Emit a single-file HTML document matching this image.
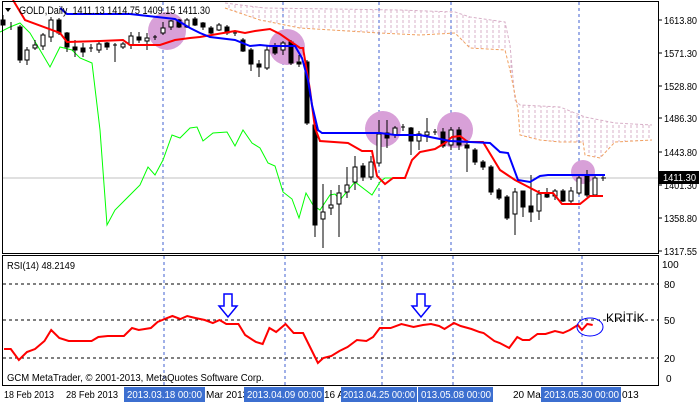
<!DOCTYPE html>
<html><head><meta charset="utf-8"><style>
html,body{margin:0;padding:0;background:#fff;}
svg{display:block;font-family:"Liberation Sans",sans-serif;}
</style></head><body>
<svg width="700" height="402" viewBox="0 0 700 402" xmlns="http://www.w3.org/2000/svg">
<defs>
<pattern id="hatch" width="6" height="5" patternUnits="userSpaceOnUse">
<line x1="1" y1="0" x2="1" y2="3" stroke="#d8b0c8" stroke-width="1"/>
</pattern>
</defs>
<rect width="700" height="402" fill="#fff"/>
<polygon points="225,3 265,8 400,10 455,12 470,17 505,22 510,45 515,100 520,105 560,107 585,117 615,123 652,125 652,140 615,142 600,158 585,155 583,142 560,142 540,140 520,135 518,110 510,70 505,50 470,48 462,40 455,33 420,35 380,33 300,28 260,20 225,8" fill="url(#hatch)"/>
<polyline points="225,3 265,8 400,10 455,12 470,17 505,22 510,45 515,100 520,105 560,107 585,117 615,123 652,125" fill="none" stroke="#d8b0c8" stroke-dasharray="3,2"/>
<polyline points="225,8 260,20 300,28 380,33 420,35 455,33 462,40 470,48 505,50 510,70 518,110 520,135 540,140 560,142 583,142 585,155 600,158 615,142 652,140" fill="none" stroke="#f0a060" stroke-dasharray="3,2"/>
<g stroke="#4060d0" stroke-dasharray="3,3" stroke-width="1">
<line x1="163" y1="2" x2="163" y2="253"/><line x1="283" y1="2" x2="283" y2="253"/><line x1="379" y1="2" x2="379" y2="253"/><line x1="451" y1="2" x2="451" y2="253"/><line x1="579" y1="2" x2="579" y2="253"/>
<line x1="164" y1="256" x2="164" y2="385"/><line x1="285" y1="256" x2="285" y2="385"/><line x1="382" y1="256" x2="382" y2="385"/><line x1="453" y1="256" x2="453" y2="385"/><line x1="582" y1="256" x2="582" y2="385"/>
</g>
<line x1="2" y1="178" x2="658" y2="178" stroke="#c0c0c0"/>
<g fill="#d8a0d8">
<circle cx="167" cy="31" r="19"/><circle cx="287" cy="47" r="18"/><circle cx="383" cy="129" r="18"/><circle cx="455" cy="130" r="18"/><circle cx="583" cy="172" r="12"/>
</g>
<polyline points="0,32 10,27 15,25 20,23 30,33 40,50 50,67 60,47 72,50 80,58 92,63 100,130 107,225 115,210 125,200 140,185 148,167 155,175 163,160 172,135 180,138 190,128 197,127 203,141 213,133 227,132 235,146 243,130 252,143 260,148 268,163 275,166 283,192 292,199 299,218 306,193 313,205 320,210 330,195 335,194 340,200 355,182 372,195 380,182 385,178 395,178" fill="none" stroke="#00ff00" stroke-width="1"/>
<g stroke="#000" stroke-width="1">
<path d="M3,15V25M11,22V30M20,25V63M27,47V65M35,40V50M43,33V50M51,17V42M59,18V35M67,32V52M75,40V57M83,43V57M91,44V52M99,42V53M107,42V50M115,43V62M123,42V49M131,32V49M139,32V43M147,33V50M155,35V40M163,22V35M171,20V30M179,19V28M187,18V28M195,17V26M203,22V30M211,26V34M219,23V31M227,25V35M235,30V36M243,38V52M251,48V71M259,60V77M267,46V70M275,43V55M283,41V55M291,40V65M299,55V67M307,60V125M315,120V237M323,184V248M331,190V215M339,185V237M347,167V198M355,156V190M363,163V181M371,156V180M379,120V166M387,120V148M395,126V138M403,124V131M411,127V155M419,131V150M427,118V142M435,129V135M443,128V148M451,127V150M459,127V150M467,140V172M475,148V165M483,160V170M491,165V195M499,188V200M507,195V220M515,188V235M523,191V217M531,175V222M539,190V220M547,188V198M555,189V200M563,189V202M571,187V203M579,176V195M587,170V197M595,174V196M603,174V181"/>
<path d="M89,48H93M113,45H117M153,37H157M233,33H237M401,127H405M433,132H437M601,178H606"/>
</g>
<g fill="#000" stroke="#000">
<rect x="1" y="20" width="4" height="5"/><rect x="18" y="27" width="4" height="33"/><rect x="57" y="20" width="4" height="13"/><rect x="65" y="33" width="4" height="14"/><rect x="73" y="47" width="4" height="3"/><rect x="81" y="48" width="4" height="4"/><rect x="105" y="43" width="4" height="4"/><rect x="137" y="37" width="4" height="3"/><rect x="177" y="20" width="4" height="7"/><rect x="193" y="19" width="4" height="6"/><rect x="201" y="23" width="4" height="4"/><rect x="209" y="28" width="4" height="5"/><rect x="225" y="27" width="4" height="6"/><rect x="241" y="40" width="4" height="11"/><rect x="249" y="50" width="4" height="14"/><rect x="257" y="64" width="4" height="3"/><rect x="273" y="46" width="4" height="7"/><rect x="289" y="42" width="4" height="21"/><rect x="297" y="62" width="4" height="2"/><rect x="305" y="62" width="4" height="61"/><rect x="313" y="125" width="4" height="100"/><rect x="361" y="166" width="4" height="11"/><rect x="385" y="133" width="4" height="5"/><rect x="409" y="128" width="4" height="13"/><rect x="441" y="132" width="4" height="14"/><rect x="457" y="130" width="4" height="15"/><rect x="465" y="145" width="4" height="3"/><rect x="473" y="150" width="4" height="12"/><rect x="481" y="162" width="4" height="5"/><rect x="489" y="167" width="4" height="25"/><rect x="497" y="190" width="4" height="8"/><rect x="505" y="197" width="4" height="21"/><rect x="521" y="191" width="4" height="16"/><rect x="529" y="206" width="4" height="6"/><rect x="545" y="193" width="4" height="4"/><rect x="561" y="191" width="4" height="10"/><rect x="585" y="176" width="4" height="19"/>
</g>
<g fill="#fff" stroke="#000">
<rect x="25" y="50" width="4" height="10"/><rect x="33" y="45" width="4" height="3"/><rect x="41" y="35" width="4" height="11"/><rect x="49" y="20" width="4" height="17"/><rect x="97" y="44" width="4" height="6"/><rect x="121" y="44" width="4" height="3"/><rect x="129" y="36" width="4" height="9"/><rect x="145" y="38" width="4" height="3"/><rect x="161" y="28" width="4" height="5"/><rect x="169" y="21" width="4" height="6"/><rect x="185" y="20" width="4" height="7"/><rect x="217" y="25" width="4" height="5"/><rect x="265" y="50" width="4" height="18"/><rect x="281" y="43" width="4" height="7"/><rect x="321" y="212" width="4" height="7"/><rect x="329" y="205" width="4" height="3"/><rect x="337" y="193" width="4" height="11"/><rect x="345" y="185" width="4" height="7"/><rect x="353" y="167" width="4" height="15"/><rect x="369" y="162" width="4" height="15"/><rect x="377" y="134" width="4" height="29"/><rect x="393" y="128" width="4" height="7"/><rect x="417" y="134" width="4" height="7"/><rect x="425" y="132" width="4" height="3"/><rect x="449" y="130" width="4" height="15"/><rect x="513" y="192" width="4" height="22"/><rect x="537" y="194" width="4" height="17"/><rect x="553" y="191" width="4" height="5"/><rect x="569" y="191" width="4" height="10"/><rect x="577" y="178" width="4" height="15"/><rect x="593" y="178" width="4" height="17"/>
</g>
<polyline points="13,0 25,20 60,33 67,42 100,41 123,40 130,45 160,45 175,40 190,38 200,37 235,31 245,33 255,31 270,29 280,34 300,48 303,48 310,90 315,128 320,141 348,143 362,151 372,151 377,176 385,184 393,178 405,178 412,160 420,152 435,149 445,143 452,137 460,136 468,142 483,142 500,170 515,180 540,193 553,193 562,204 580,204 590,196 603,196" fill="none" stroke="#ff0000" stroke-width="2"/>
<polyline points="60,8 67,14 130,14 175,19 190,28 200,33 210,37 235,40 250,46 260,45 270,46 295,46 302,58 308,80 312,105 318,130 322,133 380,133 395,135 420,135 450,141 490,143 500,152 508,153 518,180 530,182 540,176 548,175 605,175" fill="none" stroke="#0000ff" stroke-width="2"/>
<path d="M5,8 L11,8 L8,12Z" fill="#000"/>
<text x="19" y="14" font-size="11" fill="#000" textLength="191" lengthAdjust="spacingAndGlyphs">GOLD,Daily&#160; 1411.13 1414.75 1409.15 1411.30</text>
<rect x="2.5" y="1.5" width="656" height="252" fill="none" stroke="#000"/>
<rect x="2.5" y="255.5" width="656" height="130" fill="none" stroke="#000"/>
<g stroke="#000"><path d="M658,20H662M658,53H662M658,86H662M658,118H662M658,152H662M658,185H662M658,218H662M658,251H662"/></g>
<g font-size="10" fill="#000">
<text x="664" y="24" textLength="33" lengthAdjust="spacingAndGlyphs">1613.80</text><text x="664" y="57" textLength="33" lengthAdjust="spacingAndGlyphs">1571.30</text><text x="664" y="90" textLength="33" lengthAdjust="spacingAndGlyphs">1528.80</text><text x="664" y="122" textLength="33" lengthAdjust="spacingAndGlyphs">1486.30</text><text x="664" y="156" textLength="33" lengthAdjust="spacingAndGlyphs">1443.80</text><text x="664" y="189" textLength="33" lengthAdjust="spacingAndGlyphs">1401.30</text><text x="664" y="222" textLength="33" lengthAdjust="spacingAndGlyphs">1358.80</text><text x="664" y="255" textLength="33" lengthAdjust="spacingAndGlyphs">1317.55</text>
</g>
<rect x="659" y="171" width="40" height="13" fill="#000"/>
<text x="663" y="181" font-size="10" fill="#fff" textLength="33" lengthAdjust="spacingAndGlyphs">1411.30</text>
<g stroke="#000" stroke-dasharray="3,3"><line x1="3" y1="284" x2="658" y2="284"/><line x1="3" y1="320" x2="658" y2="320"/><line x1="3" y1="358" x2="658" y2="358"/></g>
<g font-size="10" fill="#000"><text x="662" y="268">100</text><text x="664" y="288">80</text><text x="664" y="324">50</text><text x="664" y="362">20</text><text x="666" y="382">0</text></g>
<text x="7" y="269" font-size="10" textLength="68" lengthAdjust="spacingAndGlyphs">RSI(14) 48.2149</text>
<g transform="scale(1.347,1)">
<polyline vector-effect="non-scaling-stroke" points="3,349 8,349 14,360 20,352 26,349 33,341 38,330 44,338 51,341 57,341 68,341 73,337 80,336 92,336 98,328 103,330 112,328 117,322 124,318 128,316 134,319 139,316 145,318 152,320 158,323 163,320 168,324 177,324 182,335 190,342 195,344 200,328 205,332 212,324 218,333 225,333 232,352 236,363 240,358 246,356 252,351 258,347 265,340 272,341 277,337 282,328 290,328 298,324 307,327 314,325 320,324 326,326 330,329 337,323 342,326 350,329 356,332 359,333 367,341 371,343 378,348 384,337 388,340 393,340 399,334 405,334 412,331 418,333 423,330 429,325 432,330 436,324 440,325" fill="none" stroke="#ff0000" stroke-width="2"/>
</g>
<path d="M224,294 V306 H219 L228,317 L237,306 H232 V294Z" fill="#fff" stroke="#0000ff" stroke-width="1.5"/>
<path d="M417,294 V306 H412 L421,317 L430,306 H425 V294Z" fill="#fff" stroke="#0000ff" stroke-width="1.5"/>
<ellipse cx="590" cy="327" rx="13" ry="9" fill="none" stroke="#0000ff"/>
<text x="606" y="322" font-size="12" fill="#000">KRİTİK</text>
<text x="7" y="381" font-size="10" textLength="257" lengthAdjust="spacingAndGlyphs">GCM MetaTrader, © 2001-2013, MetaQuotes Software Corp.</text>
<g font-size="10" fill="#000">
<text x="4" y="398" textLength="50" lengthAdjust="spacingAndGlyphs">18 Feb 2013</text><text x="66" y="398" textLength="52" lengthAdjust="spacingAndGlyphs">28 Feb 2013</text><text x="206" y="398">Mar 2013</text><text x="324" y="398">16 A</text><text x="513" y="398">20 Ma</text><text x="622" y="398">013</text>
</g>
<g fill="#3c6fd0">
<rect x="124" y="387" width="81" height="15"/><rect x="244" y="387" width="80" height="15"/><rect x="341" y="387" width="76" height="15"/><rect x="418" y="387" width="75" height="15"/><rect x="541" y="387" width="80" height="15"/>
</g>
<g font-size="10" fill="#fff">
<text x="127" y="398" textLength="75" lengthAdjust="spacingAndGlyphs">2013.03.18 00:00</text><text x="247" y="398" textLength="75" lengthAdjust="spacingAndGlyphs">2013.04.09 00:00</text><text x="343" y="398" textLength="72" lengthAdjust="spacingAndGlyphs">2013.04.25 00:00</text><text x="421" y="398" textLength="70" lengthAdjust="spacingAndGlyphs">013.05.08 00:00</text><text x="544" y="398" textLength="75" lengthAdjust="spacingAndGlyphs">2013.05.30 00:00</text>
</g>
</svg>
</body></html>
